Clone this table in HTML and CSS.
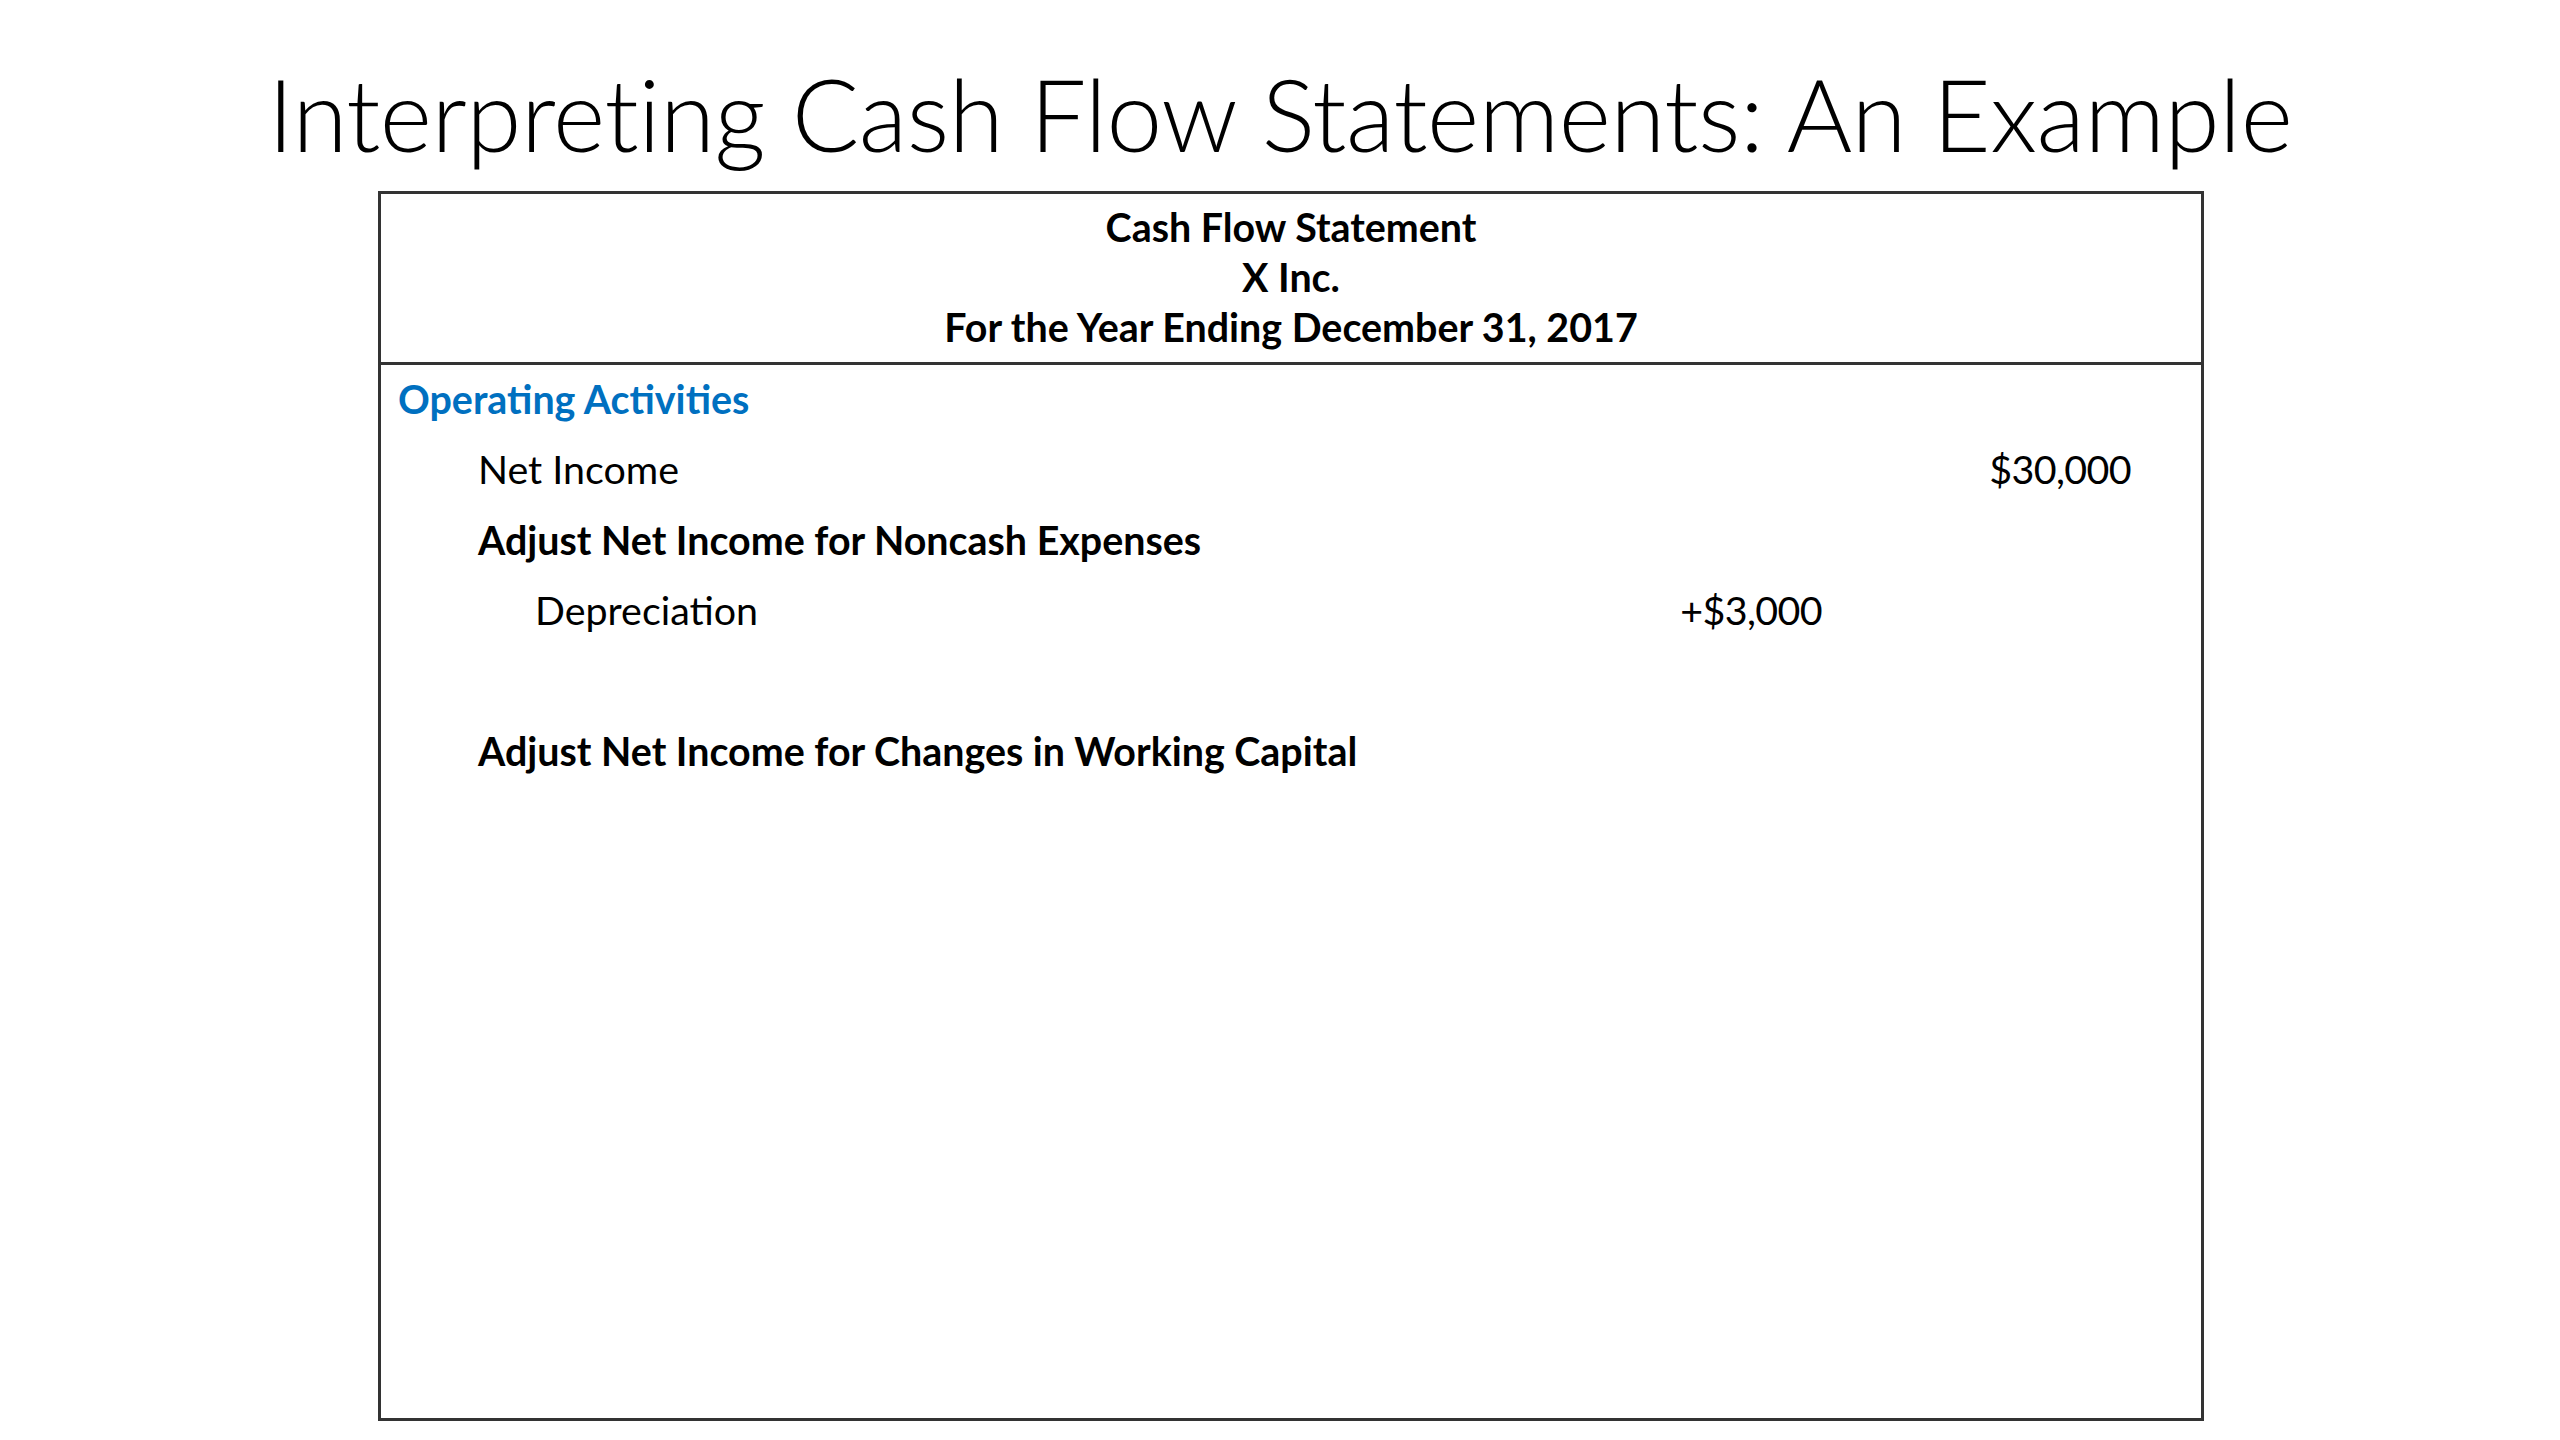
FILE: index.html
```html
<!DOCTYPE html>
<html lang="en">
<head>
<meta charset="utf-8">
<title>Interpreting Cash Flow Statements: An Example</title>
<link rel="stylesheet" href="styles.css">
</head>
<body>
<main class="slide">
  <h1 class="slide-title">Interpreting Cash Flow Statements: An Example</h1>
  <section class="statement">
    <header class="statement-head">
      <div class="head-line">Cash Flow Statement</div>
      <div class="head-line">X Inc.</div>
      <div class="head-line">For the Year Ending December 31, 2017</div>
    </header>
    <div class="statement-body">
      <div class="row">
        <span class="label section">Operating Activities</span>
        <span class="amt-mid"></span>
        <span class="amt-total"></span>
      </div>
      <div class="row">
        <span class="label lvl1">Net Income</span>
        <span class="amt-mid"></span>
        <span class="amt-total">$30,000</span>
      </div>
      <div class="row">
        <span class="label lvl1 strong">Adjust Net Income for Noncash Expenses</span>
        <span class="amt-mid"></span>
        <span class="amt-total"></span>
      </div>
      <div class="row">
        <span class="label lvl2">Depreciation</span>
        <span class="amt-mid">+$3,000</span>
        <span class="amt-total"></span>
      </div>
      <div class="row empty"></div>
      <div class="row">
        <span class="label lvl1 strong">Adjust Net Income for Changes in Working Capital</span>
        <span class="amt-mid"></span>
        <span class="amt-total"></span>
      </div>
    </div>
  </section>
</main>
</body>
</html>
```

FILE: styles.css
```css
html, body {
  margin: 0;
  padding: 0;
  background: #ffffff;
}

.slide {
  width: 2560px;
  height: 1440px;
  overflow: hidden;
  font-family: "Lato", "Open Sans", "Liberation Sans", sans-serif;
  color: #000000;
}

.slide-title {
  margin: 0;
  padding-top: 53px;
  height: 120px;
  font-size: 100px;
  line-height: 120px;
  font-weight: 300;
  text-align: center;
  letter-spacing: -0.5px;
  color: #000000;
}

.statement {
  box-sizing: border-box;
  margin-top: 18px;
  margin-left: 378px;
  width: 1826px;
  height: 1230px;
  border: 3px solid #333333;
}

.statement-head {
  padding: 8px 0 10px;
  border-bottom: 3px solid #333333;
  text-align: center;
}

.head-line {
  font-size: 39.4px;
  line-height: 50px;
  font-weight: 700;
}

.statement-body {
  padding: 9px 70px 0 17px;
  display: grid;
  row-gap: 20.4px;
}

.row {
  display: grid;
  grid-template-columns: 1fr 300px 309px;
  height: 50px;
  font-size: 39.4px;
  line-height: 50px;
}

.label {
  white-space: nowrap;
}

.section {
  color: #0070c0;
  font-weight: 700;
}

.lvl1 {
  padding-left: 80px;
}

.lvl2 {
  padding-left: 137px;
}

.strong {
  font-weight: 700;
}

.amt-mid,
.amt-total {
  text-align: right;
  white-space: nowrap;
  letter-spacing: -0.6px;
}
```
